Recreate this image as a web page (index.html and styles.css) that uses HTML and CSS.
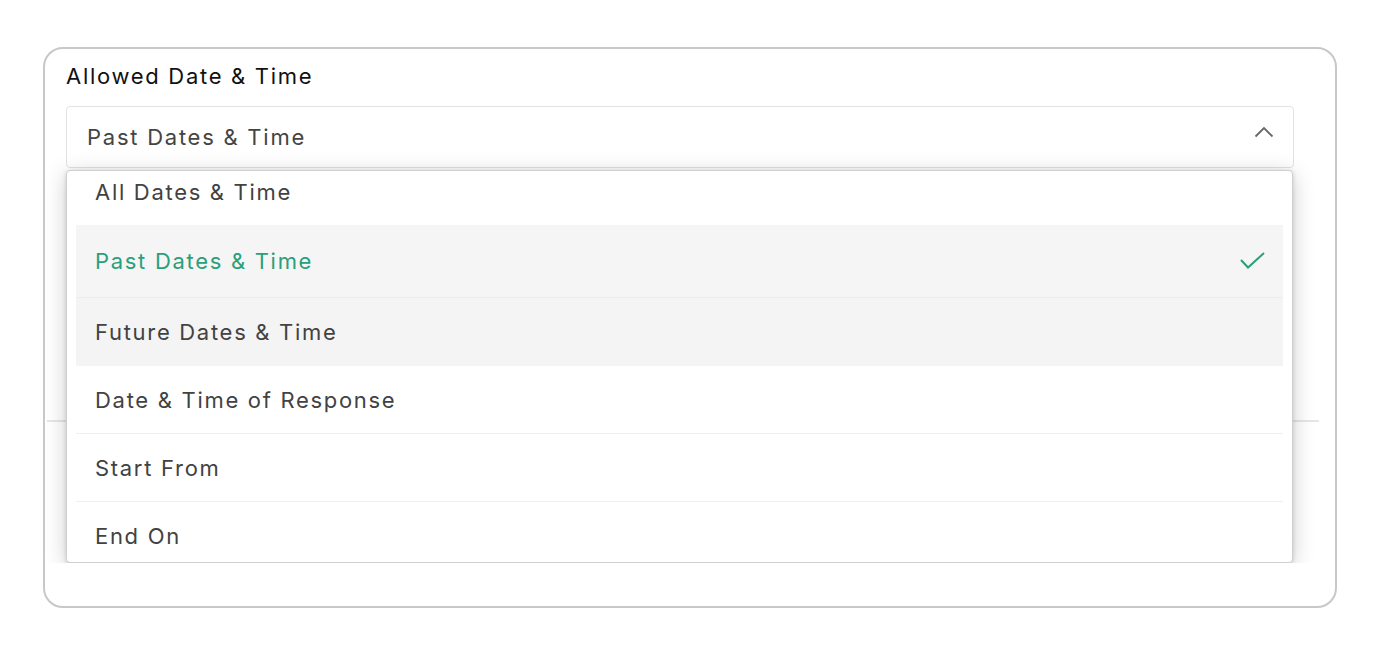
FILE: index.html
```html
<!DOCTYPE html>
<html>
<head>
<meta charset="utf-8">
<link rel="stylesheet" href="styles.css">
</head>
<body>
<div class="card">
  <div class="inner">
    <div class="label">Allowed Date &amp; Time</div>
    <div class="select">
      <span class="select-value">Past Dates &amp; Time</span>
      <svg class="chevron" width="20" height="12" viewBox="0 0 20 12"><path d="M1.5 10.5 L10 2 L18.5 10.5" fill="none" stroke="#666666" stroke-width="1.8"/></svg>
    </div>
    <div class="below">
      <div class="sep"></div>
    </div>
    <div class="dropdown">
      <ul class="options">
        <li class="opt first">All Dates &amp; Time</li>
        <li class="opt selected">Past Dates &amp; Time
          <svg class="check" width="28" height="20" viewBox="0 0 28 20"><path d="M2 9 L9 16.5 L25 2" fill="none" stroke="#2a9f7a" stroke-width="2"/></svg>
        </li>
        <li class="opt hover">Future Dates &amp; Time</li>
        <li class="opt">Date &amp; Time of Response</li>
        <li class="opt">Start From</li>
        <li class="opt last">End On</li>
      </ul>
    </div>
  </div>
</div>
</body>
</html>
```
FILE: styles.css
```css
html, body {
  margin: 0;
  padding: 0;
  background: #ffffff;
}
body {
  font-family: Inter, "Noto Sans", "Liberation Sans", sans-serif;
  padding: 47px 0 0 43px;
}
.card {
  box-sizing: border-box;
  width: 1294px;
  height: 561px;
  border: 2px solid #c8c8c8;
  border-radius: 20px;
  padding: 0 15px 0 0;
}
.inner {
  position: relative;
  height: 514px;
  overflow: hidden;
  padding: 13px 26px 0 21px;
  box-sizing: border-box;
}
.label {
  font-size: 22px;
  line-height: 28px;
  color: #111111;
  letter-spacing: 1.7px;
}
.select {
  margin-top: 16px;
  box-sizing: border-box;
  height: 62px;
  border: 1px solid #e2e2e2;
  border-radius: 4px;
  display: flex;
  align-items: center;
  justify-content: space-between;
  padding: 0 19px 0 20px;
}
.select-value {
  font-size: 22px;
  color: #444444;
  letter-spacing: 1.75px;
}
.chevron {
  display: block;
  margin-top: -10px;
}
.below {
  margin-left: -19px;
  margin-right: -25px;
}
.sep {
  margin-top: 252px;
  height: 2px;
  background: #e6e6e6;
}
.dropdown {
  position: absolute;
  left: 21px;
  top: 121px;
  width: 1227px;
  height: 393px;
  box-sizing: border-box;
  background: #fff;
  border: 1px solid #d0d0d0;
  border-radius: 4px;
  box-shadow: 0 4px 22px rgba(0, 0, 0, 0.2), 0 1px 4px rgba(0, 0, 0, 0.14);
  overflow: hidden;
  padding: 0 9px;
}
.options {
  list-style: none;
  margin: 0;
  padding: 0;
}
.opt {
  display: flex;
  align-items: center;
  justify-content: space-between;
  box-sizing: border-box;
  height: 68px;
  padding: 0 16px 0 19px;
  border-bottom: 1px solid #efefef;
  font-size: 22px;
  color: #424242;
  letter-spacing: 1.7px;
}
.opt.first {
  height: 54px;
  align-items: flex-start;
  padding-top: 8px;
  border-bottom: none;
}
.opt.selected {
  height: 73px;
  background: #f5f5f5;
  color: #2a9f7a;
  border-bottom: 1px solid #ededed;
}
.opt.hover {
  background: #f4f4f4;
  border-bottom: none;
}
.opt.last {
  border-bottom: none;
}
.check {
  display: block;
}
```
